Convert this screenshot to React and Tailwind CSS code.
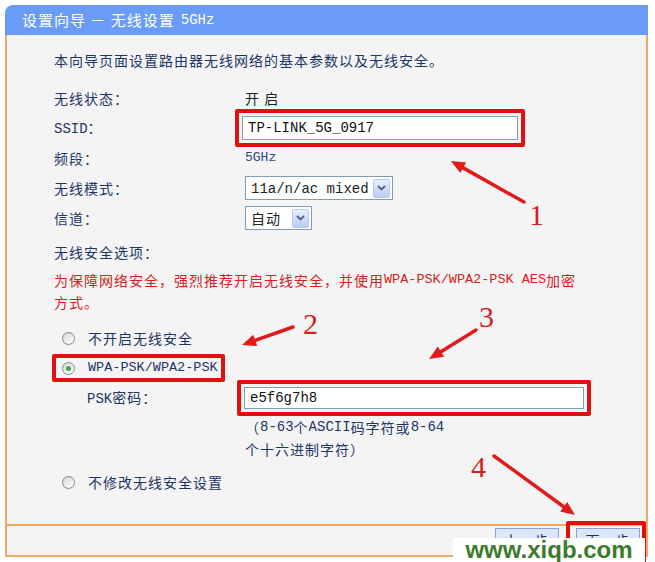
import React from 'react';

const cjk = "font-['Noto_Sans_CJK_SC',sans-serif] tracking-[1px]";
const mono = "font-['Liberation_Mono','Noto_Sans_CJK_SC',monospace] tracking-normal";

function Radio({ checked }) {
  return (
    <span className="w-[13px] h-[13px] rounded-full border border-[#7d8b9a] bg-gradient-to-br from-[#d6d6d6] to-white flex items-center justify-center shrink-0">
      {checked && <span className="w-[5px] h-[5px] rounded-full bg-[#35b140]" />}
    </span>
  );
}

function Select({ children, width }) {
  return (
    <div className={`flex items-center h-[24px] border border-[#7f9db9] bg-white pl-[5px] pr-[2px] ${width}`}>
      <span className="text-[#222]">{children}</span>
      <span className="ml-auto w-[17px] h-[19px] rounded-[2px] border border-[#b8c9ef] bg-gradient-to-b from-[#e8efff] to-[#b7cbf4] flex items-center justify-center">
        <svg width="9" height="6" viewBox="0 0 9 6">
          <path d="M1 1 L4.5 4.5 L8 1" fill="none" stroke="#4d6185" strokeWidth="1.8" />
        </svg>
      </span>
    </div>
  );
}

function Row({ label, children, className = '' }) {
  return (
    <div className={`h-[30px] flex items-center ${className}`}>
      <div className="w-[191px] shrink-0 text-[#1e3566]">{label}</div>
      <div className="flex items-center">{children}</div>
    </div>
  );
}

function Line({ children, className = '' }) {
  return <div className={`h-[22px] flex items-center whitespace-pre ${className}`}>{children}</div>;
}

function Arrow({ x1, y1, x2, y2 }) {
  const a = Math.atan2(y2 - y1, x2 - x1);
  const len = 14, w = 6;
  const bx = x2 - len * Math.cos(a), by = y2 - len * Math.sin(a);
  const px = -Math.sin(a) * w, py = Math.cos(a) * w;
  return (
    <g>
      <line x1={x1} y1={y1} x2={bx} y2={by} stroke="#e11b1b" strokeWidth="3.5" strokeLinecap="round" />
      <polygon points={`${x2},${y2} ${bx + px},${by + py} ${bx - px},${by - py}`} fill="#e11b1b" />
    </g>
  );
}

export default function App() {
  return (
    <div className={`relative w-[655px] h-[562px] bg-white overflow-hidden text-[14px] ${cjk}`}>
      <div className="ml-[5px] pt-[5px] w-[643px]">
        {/* title */}
        <div className="h-[30px] bg-[#6a9bf7] rounded-tl-[8px] flex items-center pl-[17px] text-white text-[15px]">
          设置向导 － 无线设置 <span className={`ml-[6px] text-[14px] ${mono}`}>5GHz</span>
        </div>

        {/* body */}
        <div className="h-[489px] border-x-2 border-[#f0a964] bg-[#f4f4f4] pl-[47px] pt-[14px]">
          <Line className="text-[#1e3566]">本向导页面设置路由器无线网络的基本参数以及无线安全。</Line>

          <Row label="无线状态：" className="mt-[12px]">
            <span className="text-[#222]">开 启</span>
          </Row>
          <Row label={<><span className={mono}>SSID</span>：</>}>
            <div className="ml-[-10px] border-4 border-[#e01010] p-[3px] rounded-[2px]">
              <div className={`w-[276px] h-[24px] border border-[#7f9db9] bg-white flex items-center pl-[5px] text-[#111] ${mono}`}>TP-LINK_5G_0917</div>
            </div>
          </Row>
          <Row label="频段：">
            <span className={`text-[#2c4a7c] text-[13px] ${mono}`}>5GHz</span>
          </Row>
          <Row label="无线模式：">
            <Select width="w-[148px]"><span className={mono}>11a/n/ac mixed</span></Select>
          </Row>
          <Row label="信道：">
            <Select width="w-[67px]">自动</Select>
          </Row>

          <div className="mt-[4px] h-[30px] flex items-center text-[#1e3566]">无线安全选项：</div>
          <div className="mt-[2px] text-[#d42222]">
            <Line>为保障网络安全，强烈推荐开启无线安全，并使用<span className={`text-[13.5px] ${mono}`}>WPA-PSK/WPA2-PSK AES</span>加密</Line>
            <Line>方式。</Line>
          </div>

          <div className="mt-[10px] h-[30px] flex items-center pl-[8px] gap-[13px] text-[#1e3566]">
            <Radio />不开启无线安全
          </div>
          <div className="h-[30px] flex items-center">
            <div className="ml-[-2px] w-[173px] h-[28px] border-4 border-[#e01010] rounded-[2px] flex items-center pl-[6px] gap-[13px] text-[#1e3566]">
              <Radio checked /><span className={`text-[13.5px] ${mono}`}>WPA-PSK/WPA2-PSK</span>
            </div>
          </div>
          <div className="h-[30px] flex items-center">
            <div className="w-[183px] shrink-0 pl-[33px] text-[#1e3566]"><span className={mono}>PSK</span>密码：</div>
            <div className="border-4 border-[#e01010] p-[3px] rounded-[2px]">
              <div className={`w-[340px] h-[22px] border border-[#7f9db9] bg-white flex items-center pl-[5px] text-[#111] ${mono}`}>e5f6g7h8</div>
            </div>
          </div>
          <div className="mt-[3px] ml-[191px] text-[#1e3566]">
            <Line>（<span className={mono}>8-63</span>个<span className={mono}>ASCII</span>码字符或<span className={mono}>8-64</span></Line>
            <Line>个十六进制字符）</Line>
          </div>
          <div className="mt-[7px] h-[30px] flex items-center pl-[8px] gap-[13px] text-[#1e3566]">
            <Radio />不修改无线安全设置
          </div>
        </div>

        {/* footer */}
        <div className="h-[33px] border-2 border-[#f0a964] bg-[#f4f4f4] flex items-start justify-end gap-[17px] pr-[6px] pt-[2px]">
          <div className="w-[64px] h-[24px] border border-[#8aa0d8] bg-[#dde5f8] flex items-start justify-center pt-[1px] text-[#1e2e55]">上一步</div>
          <div className="w-[64px] h-[24px] border border-[#8aa0d8] bg-[#dde5f8] flex items-start justify-center pt-[1px] text-[#1e2e55]">下一步</div>
        </div>
      </div>

      {/* annotations */}
      <div className="absolute left-[566px] top-[521px] w-[80px] h-[46px] border-4 border-[#e01010] rounded-[2px]" />
      <svg className="absolute inset-0 pointer-events-none" width="655" height="562">
        <Arrow x1={524} y1={202} x2={451} y2={161} />
        <Arrow x1={293} y1={327} x2={242} y2={345} />
        <Arrow x1={476} y1={330} x2={429} y2={359} />
        <Arrow x1={494} y1={456} x2={575} y2={515} />
      </svg>
      <span className="absolute left-[529px] top-[200px] text-[30px] leading-none text-[#d42020] font-['Liberation_Serif',serif]">1</span>
      <span className="absolute left-[303px] top-[309px] text-[30px] leading-none text-[#d42020] font-['Liberation_Serif',serif]">2</span>
      <span className="absolute left-[479px] top-[302px] text-[30px] leading-none text-[#d42020] font-['Liberation_Serif',serif]">3</span>
      <span className="absolute left-[471px] top-[452px] text-[30px] leading-none text-[#d42020] font-['Liberation_Serif',serif]">4</span>

      {/* watermark */}
      <div className="absolute left-[453px] top-[538px] w-[192px] h-[24px] bg-white flex items-center justify-center">
        <span className="text-[24px] font-bold leading-none text-[#3b7b2b] font-['Liberation_Sans',sans-serif] tracking-normal">www.xiqb.com</span>
      </div>
    </div>
  );
}
